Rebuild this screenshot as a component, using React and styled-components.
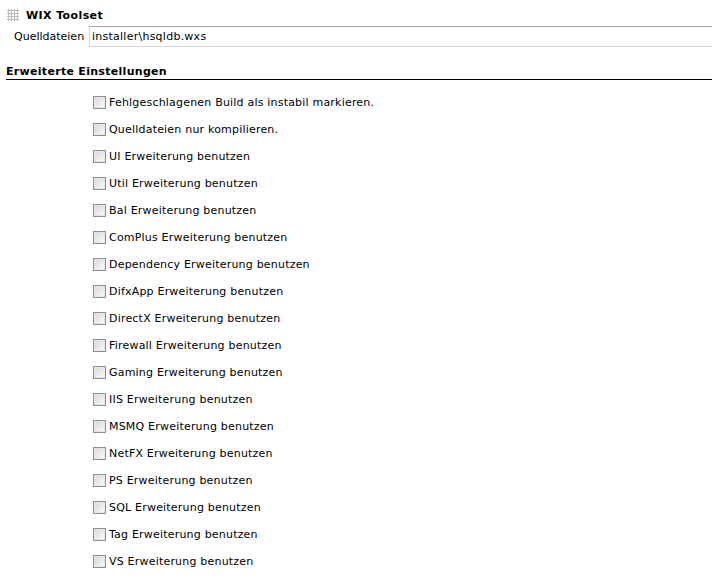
import React from "react"
import styled, { createGlobalStyle } from "styled-components"

const GlobalStyle = createGlobalStyle`
  body {
    margin: 0;
    background: #fff;
    font-family: "DejaVu Sans", Verdana, sans-serif;
    font-size: 11px;
    color: #000;
  }
`

const Page = styled.div`
  width: 712px;
  height: 587px;
  overflow: hidden;
`

const Header = styled.div`
  display: flex;
  align-items: center;
  height: 22px;
  margin-top: 4px;
  padding-left: 7px;
  gap: 7px;
`

const Grip = styled.span`
  width: 12px;
  height: 12px;
  background-image: radial-gradient(#bcbcbc 1px, transparent 1.2px);
  background-size: 3px 3px;
`

const Title = styled.span`
  font-weight: bold;
  letter-spacing: 0.4px;
`

const FieldRow = styled.div`
  display: flex;
  align-items: center;
  padding-left: 14px;
  height: 21px;
`

const Label = styled.label`
  width: 75px;
`

const TextInput = styled.input`
  flex: 1;
  height: 21px;
  box-sizing: border-box;
  border: 1px solid #d6d6dc;
  border-top-color: #a3a3a6;
  border-right: none;
  padding: 0 2px;
  font-family: inherit;
  font-size: 11px;
  letter-spacing: 0.25px;
  color: #000;
  outline: none;
`

const Section = styled.div`
  margin: 18px 0 0 6px;
  padding-bottom: 1px;
  border-bottom: 1px solid #000;
  font-weight: bold;
  letter-spacing: 0.3px;
`

const Options = styled.ul`
  list-style: none;
  margin: 9px 0 0;
  padding: 0 0 0 93px;
`

const Option = styled.li`
  display: flex;
  align-items: center;
  height: 27px;
  gap: 3px;
  letter-spacing: 0.2px;
`

const Box = styled.input`
  appearance: none;
  margin: 0;
  width: 13px;
  height: 13px;
  border: 1px solid #8e8f8f;
  background: linear-gradient(135deg, #d6d6d6 0%, #f0f0f0 70%, #fff 100%);
  box-sizing: border-box;
  box-shadow: inset 0 0 0 1px #e6e6e6;
`

const options = [
  "Fehlgeschlagenen Build als instabil markieren.",
  "Quelldateien nur kompilieren.",
  "UI Erweiterung benutzen",
  "Util Erweiterung benutzen",
  "Bal Erweiterung benutzen",
  "ComPlus Erweiterung benutzen",
  "Dependency Erweiterung benutzen",
  "DifxApp Erweiterung benutzen",
  "DirectX Erweiterung benutzen",
  "Firewall Erweiterung benutzen",
  "Gaming Erweiterung benutzen",
  "IIS Erweiterung benutzen",
  "MSMQ Erweiterung benutzen",
  "NetFX Erweiterung benutzen",
  "PS Erweiterung benutzen",
  "SQL Erweiterung benutzen",
  "Tag Erweiterung benutzen",
  "VS Erweiterung benutzen",
]

const App = () => (
  <Page>
    <GlobalStyle />
    <Header>
      <Grip />
      <Title>WIX Toolset</Title>
    </Header>
    <FieldRow>
      <Label>Quelldateien</Label>
      <TextInput defaultValue="installer\hsqldb.wxs" />
    </FieldRow>
    <Section>Erweiterte Einstellungen</Section>
    <Options>
      {options.map((text) => (
        <Option key={text}>
          <Box type="checkbox" />
          <span>{text}</span>
        </Option>
      ))}
    </Options>
  </Page>
)

export default App
